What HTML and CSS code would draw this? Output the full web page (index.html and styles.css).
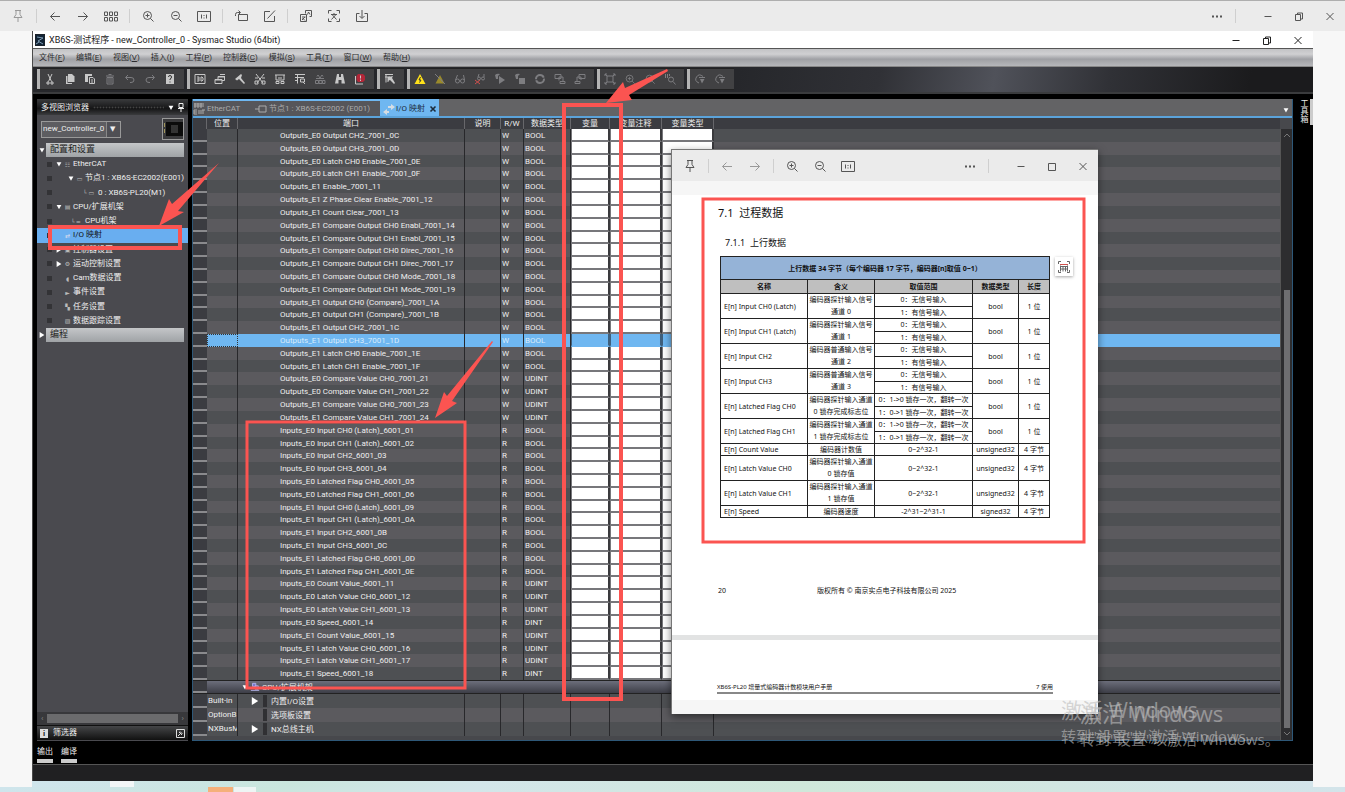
FILE: index.html
```html
<!DOCTYPE html>
<html lang="en">
<head>
<meta charset="utf-8">
<title>XB6S-测试程序 - Sysmac Studio</title>
<link rel="stylesheet" href="styles.css">
</head>
<body>
<svg class="defs" aria-hidden="true">
  <symbol id="pin" viewBox="0 0 14 14"><path d="M4 1.500h6M5 1.500v4L3 8.500h8L9 5.500v-4M7 8.500V13"/></symbol>
  <symbol id="back" viewBox="0 0 14 14"><path d="M12 7.500H2.500M6.500 3.500l-4 4 4 4"/></symbol>
  <symbol id="fwd" viewBox="0 0 14 14"><path d="M2 7.500h9.500M7.500 3.500l4 4-4 4"/></symbol>
  <symbol id="thumbs" viewBox="0 0 14 14"><path d="M.5 3h3v3.500h-3zM5.500 3h3v3.500h-3zM10.500 3h3v3.500h-3zM.5 8.500h3V12h-3zM5.500 8.500h3V12h-3zM10.500 8.500h3V12h-3z"/></symbol>
  <symbol id="zin" viewBox="0 0 14 14"><circle cx="6.500" cy="6.500" r="4"/><path d="M9.500 9.500l3 3M4.500 6.500h4M6.500 4.500v4"/></symbol>
  <symbol id="zout" viewBox="0 0 14 14"><circle cx="6.500" cy="6.500" r="4"/><path d="M9.500 9.500l3 3M4.500 6.500h4"/></symbol>
  <symbol id="one" viewBox="0 0 14 14"><path d="M.5 2.500h13v10H.5zM4.500 5.500v4M9.500 5.500v4M7 6v1M7 8.500v1"/></symbol>
  <symbol id="rot" viewBox="0 0 14 14"><path d="M4.500 5.500h9v6h-9zM1.500 7V5.500q0-2 2-2H6M4.500 1.500l2 2-2 2"/></symbol>
  <symbol id="edit" viewBox="0 0 14 14"><path d="M8 2.500H2.500v10h10V7M5.500 9.500l7.500-8"/></symbol>
  <symbol id="trans" viewBox="0 0 14 14"><path d="M6.500 1.500h6v6h-2M6.500 1.500v3M1.500 5.500h6v7h-6zM3 8h3.500M3 11l3-3M3.500 9l2.500 2.500M8.500 5.500l1-2.500 1.500 2.500"/></symbol>
  <symbol id="scan" viewBox="0 0 14 14"><path d="M1.500 4.500v-3h3M9.500 1.500h3v3M12.500 9.500v3h-3M4.500 12.500h-3v-3M4 5.500h6M7 4v1.500M9 5.500L4.500 10.500M5 5.500l4.500 5"/></symbol>
  <symbol id="save" viewBox="0 0 14 14"><path d="M4.500 4.500h-3v8h11v-8h-3M7 1v8M4.500 7L7 9.500 9.500 7"/></symbol>
  <symbol id="dots" viewBox="0 0 14 14"><path class="solid" d="M2 6.500h2v2H2zM6 6.500h2v2H6zM10 6.500h2v2h-2z"/></symbol>
  <symbol id="min" viewBox="0 0 14 14"><path d="M3.500 7.500h7"/></symbol>
  <symbol id="max" viewBox="0 0 14 14"><path d="M3.500 4.500h7v7h-7z"/></symbol>
  <symbol id="rest" viewBox="0 0 14 14"><path d="M3.500 5.500h5v6h-5zM5.500 5V4h5v6H9"/></symbol>
  <symbol id="close" viewBox="0 0 14 14"><path d="M3.500 4l7 7M10.500 4l-7 7"/></symbol>

  <symbol id="t-cut" viewBox="0 0 12 12"><path d="M4 1l3.500 7.500M8 1L4.500 8.500M3 9h2v2H3zM7 9h2v2H7z"/></symbol>
  <symbol id="t-copy" viewBox="0 0 12 12"><path class="solid" d="M4 1h4l2.500 2.500V9H4z"/><path class="solid" d="M2 3h1.500v7H8v1H2z"/></symbol>
  <symbol id="t-paste" viewBox="0 0 12 12"><path class="solid" d="M1 1h7v2H4v6H1z"/><path d="M5.500 4.500H9L10.500 6v4.500h-5zM7 7h2M7 9h2"/></symbol>
  <symbol id="t-del" viewBox="0 0 12 12"><path d="M2 3h8M4.500 1.500h3M3 4.500h6V11H3zM5 5v5M7 5v5"/></symbol>
  <symbol id="t-undo" viewBox="0 0 12 12"><path d="M4 2L1.500 4.500 4 7M2 4.500h5q3 0 3 2.500T7 9.500H6"/></symbol>
  <symbol id="t-redo" viewBox="0 0 12 12"><path d="M8 2l2.500 2.500L8 7M10 4.500H5Q2 4.500 2 7t3 2.500h1"/></symbol>
  <symbol id="t-help" viewBox="0 0 12 12"><path class="solid" d="M2 1h8v10H2z"/><path class="ink" d="M4.500 4q0-1.500 1.500-1.500T7.500 4 6 6v1M6 8.500v1"/></symbol>
  <symbol id="t-3d" viewBox="0 0 12 12"><path d="M1 1.500h10v9H1zM3 4h2v4H3M3 6h2M7 4h1l1 1v2L8 8H7z"/></symbol>
  <symbol id="t-win" viewBox="0 0 12 12"><path d="M1 6.500h7v4H1zM4 6V3.500h6.500v4H8M6 1.500h5"/><path class="solid" d="M4 3h7v1.500H4zM1 6h7v1.500H1z"/></symbol>
  <symbol id="t-build" viewBox="0 0 12 12"><path class="solid" d="M1 6l6-5 1 1-1 3 4 5-1 1-5-5-2 1.500z"/></symbol>
  <symbol id="t-cross" viewBox="0 0 12 12"><path d="M2 1l7 9M10 1L3 10M1 5h3M8 5h3M1 8h3v3H1zM8 8h3v3H8z"/></symbol>
  <symbol id="t-mon" viewBox="0 0 12 12"><path d="M1 2h10M2 2v5h8V2M4 5h4M2 10.500h3v-2H2zM7 10.500h3v-2H7z"/></symbol>
  <symbol id="t-grid" viewBox="0 0 12 12"><path d="M1 1.500h10M1 4.500h9M3.500 1.500v9M6.500 6h4v3h-4zM1 7.500h3M9 9l2 2"/></symbol>
  <symbol id="t-bin" viewBox="0 0 12 12"><path d="M3 3.500q1-3 2 0t2 0 2 0M2 5.500h8M1.500 7.500h3v3h-3zM5 7.500h3v3H5zM8.500 7.500H11v3H8.500z"/></symbol>
  <symbol id="t-find" viewBox="0 0 12 12"><path class="solid" d="M3 1h2v3h2V1h2l2 9.500H7.500V7h-3v3.500H1z"/></symbol>
  <symbol id="t-err" viewBox="0 0 12 12"><path d="M1.500 3v8H9"/><path class="red" d="M4 1h5l2 2v4L9 9H4L2.500 7V3z"/><path d="M6.500 2.500v3M6.500 6.500v1.500"/></symbol>
  <symbol id="t-sel" viewBox="0 0 12 12"><path d="M1 1.500h8M1 4h5M2 1.500v8M4 9V4"/><path class="solid" d="M4 4l5-1-1 2 3 5-1 1-4-4-2 1z"/></symbol>
  <symbol id="t-zfind" viewBox="0 0 12 12"><path d="M1.500 1v4M3.500 1v4M5.500 1v2"/><circle cx="7" cy="6.500" r="2.500"/><path d="M9 8.500l2.500 3"/></symbol>
  <symbol id="t-warn" viewBox="0 0 12 12"><path class="yel" d="M6 1l5.500 10H.5z"/><path class="ink" d="M6.500 4L5 7h2L5.500 9.500"/></symbol>
  <symbol id="t-warnoff" viewBox="0 0 12 12"><path class="yeldim" d="M6 2l4.500 8.500h-9z"/><path d="M1 1l10 10"/></symbol>
  <symbol id="t-eye" viewBox="0 0 12 12"><circle cx="3.500" cy="8" r="2"/><circle cx="8.500" cy="8" r="2"/><path d="M1.500 7l2-5M10.500 7l-1-5"/></symbol>
  <symbol id="t-eyex" viewBox="0 0 12 12"><circle cx="5" cy="5.500" r="1.500"/><circle cx="9" cy="5.500" r="1.500"/><path d="M4 4l1-3M10 4V1"/><path class="redline" d="M1 7l5 4M6 7l-5 4"/></symbol>
  <symbol id="t-run" viewBox="0 0 12 12"><path class="solid" d="M5 3l6 4-6 4zM1 2q2-2 5-1L4 3v3H2z"/></symbol>
  <symbol id="t-stop" viewBox="0 0 12 12"><path class="solid" d="M5 5h6v6H5zM1 2q2-2 5-1L4 3v3H2z"/></symbol>
  <symbol id="t-loop" viewBox="0 0 12 12"><circle cx="6" cy="6" r="4" stroke-width="2" stroke-dasharray="11 1"/></symbol>
  <symbol id="t-dn" viewBox="0 0 12 12"><path d="M1 1.500h6v4H1zM5 7.500V4h4v5M6 8.500h5v2H6z"/></symbol>
  <symbol id="t-up" viewBox="0 0 12 12"><path d="M5 1.500h6v4H5zM3 8V4h4v3M1 8.500h5v2H1z"/></symbol>
  <symbol id="t-fit" viewBox="0 0 12 12"><path d="M3 3h6v6H3zM1 1l2 2M11 1L9 3M1 11l2-2M11 11L9 9M1 3V1h2M9 1h2v2M11 9v2H9M3 11H1V9"/></symbol>
  <symbol id="t-go" viewBox="0 0 12 12"><path d="M9 3.500Q5 0 2.500 4T5 10M5 4.500h6"/><path class="solid" d="M6 6h4.500L8 10.500z"/></symbol>
</svg>

<div class="viewer">
  <header class="bar" data-bar="main"></header>

  <main class="canvas">
    <div class="app">
      <div class="title">
        <svg class="logo" viewBox="0 0 10 12"><path fill="#122436" d="M0 0h10v12H0z"/><path d="M2 3l6 1-5 3 5 3M1 10l3-2" stroke="#7f9cb4" fill="none"/></svg>
        <h1>XB6S-测试程序 - new_Controller_0 - Sysmac Studio (64bit)</h1>
        <div class="wctl">
          <button aria-label="Minimise"><svg><use href="#min"/></svg></button>
          <button aria-label="Restore"><svg><use href="#rest"/></svg></button>
          <button aria-label="Close"><svg><use href="#close"/></svg></button>
        </div>
      </div>
      <nav class="menu">
        <button>文件(<u>F</u>)</button><button>编辑(<u>E</u>)</button><button>视图(<u>V</u>)</button><button>插入(<u>I</u>)</button><button>工程(<u>P</u>)</button><button>控制器(<u>C</u>)</button><button>模拟(<u>S</u>)</button><button>工具(<u>T</u>)</button><button>窗口(<u>W</u>)</button><button>帮助(<u>H</u>)</button>
      </nav>
      <div class="tools" id="tools"></div>

      <div class="work">
        <aside class="side">
          <div class="side-head"><h2>多视图浏览器</h2><i class="dotline"></i><span class="tri down"></span><svg class="tack" viewBox="0 0 6 9"><path d="M1 .5h4v4H1zM0 5.500h6M3 5.500V9" stroke="#eee" fill="none"/></svg></div>
          <div class="side-body">
            <div class="pick">
              <select aria-label="Controller"><option>new_Controller_0</option></select>
              <button class="chip" aria-label="Controller picture"><svg viewBox="0 0 20 18"><path fill="#0b0b0b" stroke="none" d="M3 2h17v14H3z"/><path fill="#333" stroke="none" d="M8 5h7v8H8z"/><path stroke="#a0955a" d="M1.500 3v12" stroke-dasharray="4 2"/></svg></button>
            </div>
            <div class="sec"><span class="tri down"></span><h3>配置和设置</h3></div>
            <ul class="tree">
              <li class="d1"><b></b><span class="tri down"></span><em>☷</em>EtherCAT</li>
              <li class="d2"><b></b><span class="tri down"></span><em>▭</em>节点1 : XB6S-EC2002(E001)</li>
              <li class="d3"><b></b><em>└ ▭</em>0 : XB6S-PL20(M1)</li>
              <li class="d1"><b></b><span class="tri down"></span><em>▤</em>CPU/扩展机架</li>
              <li class="d2b"><b></b><em>└ ═</em>CPU机架</li>
              <li class="d1 on"><b></b><span class="tri none"></span><em>⇄</em>I/O 映射</li>
              <li class="d1"><b></b><span class="tri right"></span><em>▣</em>控制器设置</li>
              <li class="d1"><b></b><span class="tri right"></span><em>⚙</em>运动控制设置</li>
              <li class="d1"><b></b><span class="tri none"></span><em>◖</em>Cam数据设置</li>
              <li class="d1"><b></b><span class="tri none"></span><em>►</em>事件设置</li>
              <li class="d1"><b></b><span class="tri none"></span><em>▚</em>任务设置</li>
              <li class="d1"><b></b><span class="tri none"></span><em>▨</em>数据跟踪设置</li>
            </ul>
            <div class="sec"><span class="tri right"></span><h3>编程</h3></div>
          </div>
          <div class="hscroll"><span>‹</span><i></i><span>›</span></div>
          <div class="filter"><b>i</b><span>筛选器</span><svg viewBox="0 0 9 9"><path d="M.5.5h8v8h-8z" stroke="#ddd"/><path d="M2 7l2-2M3 3l3 3M4 2.500L6.500 5" stroke="#ddd"/></svg></div>
        </aside>

        <section class="doc">
          <div class="tabs">
            <button class="tab t1"><svg viewBox="0 0 12 14"><path d="M1 2h10M1 4h10M2 1v5M5 1v5M8 1v5M1 8h3M1 10h3M1 12h3M1 8v4M6 8v4M8 8v4M10 8v4M9 8h3" stroke="#aaa" fill="none"/></svg>EtherCAT</button>
            <button class="tab t2"><svg viewBox="0 0 12 14"><path d="M0 7h4M4 4h7v6H4z" stroke="#aaa" fill="none"/></svg>节点1 : XB6S-EC2002 (E001)</button>
            <button class="tab t3"><svg viewBox="0 0 12 14"><path d="M5 4h3V2l4 3-4 3V6H5zM6 9H4V7L0 10l4 3v-2h2z" fill="#d5dde4" stroke="none"/></svg>I/O 映射<svg class="x" viewBox="0 0 8 8"><path d="M1.500 1.500l5 5M6.500 1.500l-5 5" stroke-width="1.600"/></svg></button>
            <span class="tri down"></span>
          </div>
          <div class="gridwrap">
            <table class="grid">
              <thead><tr><th></th><th>位置</th><th>端口</th><th>说明</th><th>R/W</th><th>数据类型</th><th>变量</th><th>变量注释</th><th>变量类型</th><th></th></tr></thead>
              <tbody class="ports" id="ports"></tbody>
              <tbody class="racks">
                <tr class="rack"><td></td><td></td><td class="cpu"><span class="tri down"></span><svg viewBox="0 0 12 12"><path d="M3 1h4v4H3zM6 4h4v4H6zM1 9.500h10" stroke="#b8b8f0" fill="#7779cc"/></svg>CPU/扩展机架</td><td></td><td></td><td></td><td></td><td></td><td></td><td></td></tr>
                <tr><td></td><td>Built-in</td><td class="sub"><span class="tri right"></span><i></i>内置I/O设置</td><td></td><td></td><td></td><td></td><td></td><td></td><td></td></tr>
                <tr><td></td><td>OptionB</td><td class="sub"><span class="tri none"></span><i></i>选项板设置</td><td></td><td></td><td></td><td></td><td></td><td></td><td></td></tr>
                <tr><td></td><td>NXBusM</td><td class="sub"><span class="tri right"></span><i></i>NX总线主机</td><td></td><td></td><td></td><td></td><td></td><td></td><td></td></tr>
              </tbody>
            </table>
            <div class="vscroll"><svg viewBox="0 0 10 12"><path d="M2 8l3-3 3 3"/></svg><i></i><svg viewBox="0 0 10 12"><path d="M2 4l3 3 3-3"/></svg></div>
          </div>
        </section>
        <div class="toolbox"><span>工具箱</span><i></i></div>
      </div>
      <div class="outs"><button>输出</button><button>编译</button></div>
      <div class="status"></div>
      <div class="dock"></div>
    </div>
  </main>
  <footer class="taskbar"></footer>

  <section class="popup">
    <header class="bar" data-bar="popup"></header>
    <div class="page">
      <h2>7.1&nbsp; 过程数据</h2>
      <h3>7.1.1&nbsp; 上行数据</h3>
      <table class="spec">
        <colgroup><col class="c1"><col class="c2"><col class="c3"><col class="c4"><col class="c5"></colgroup>
        <thead>
          <tr class="cap"><th colspan="5">上行数据 34 字节（每个编码器 17 字节，编码器[n]取值 0~1）</th></tr>
          <tr class="cols"><th>名称</th><th>含义</th><th>取值范围</th><th>数据类型</th><th>长度</th></tr>
        </thead>
        <tbody id="spec"></tbody>
      </table>
      <button class="snip" aria-label="Table capture"><svg viewBox="0 0 14 14"><path d="M1.500 4V1.500H4M10 1.500h2.500V4M12.500 10v2.500H10M4 12.500H1.500V10M3.500 5.500v6M10.500 5.500v6M3.500 6.500h7M3.500 9h7M6 6.500v5M8.500 6.500v5"/><path class="redline" d="M3 4.500h8"/></svg></button>
      <p class="copy"><span>20</span><span>版权所有 © 南京实点电子科技有限公司 2025</span></p>
    </div>
    <div class="page next"><p><span>XB6S-PL20 增量式编码器计数模块用户手册</span><span>7 使用</span></p></div>
  </section>

  <div class="mark m1"><p>激活 Windows</p><p>转到"设置"以激活 Windows。</p></div>
  <div class="mark m2"><p>激活 Windows</p><p>转到"设置"以激活 Windows。</p></div>

  <svg class="notes" width="1345" height="792" viewBox="0 0 1345 792">
    <g fill="none" stroke="#fb5451">
      <rect x="564" y="105" width="57" height="594" stroke-width="4"/>
      <rect x="50" y="227" width="130" height="21" stroke-width="4"/>
      <rect x="247" y="422" width="218" height="266" stroke-width="3"/>
      <rect x="703" y="199" width="381" height="343" stroke-width="3"/>
    </g>
    <g fill="#fb5451">
      <path d="M667 69L625 88L623 82L606 103L632 100L629 95L668 71z"/>
      <path d="M219 163L172 204L169 199L159 226L184 212L178 211z"/>
      <path d="M492 341L447 396L444 392L435 418L457 403L452 401L493 342z"/>
    </g>
  </svg>
</div>
<script src="app.js"></script>
</body>
</html>
```
FILE: styles.css
```css
* { box-sizing: border-box; }
body, h1, h2, h3, p, ul { margin: 0; padding: 0; }
body { font-family: Roboto, "Noto Sans CJK SC", sans-serif; font-size: 8px; line-height: 12px; }
h1, h2, h3 { font-size: inherit; font-weight: 400; }
button, select { font: inherit; color: inherit; margin: 0; padding: 0; border: 0; background: none; appearance: none; }
ul { list-style: none; }
svg { fill: none; stroke: currentColor; flex: none; display: block; }
i, em { font-style: normal; }
.defs { position: absolute; width: 0; height: 0; }
.solid { fill: currentColor; stroke: none; }
.ink { stroke: #333; }
.red { fill: #b32638; stroke: none; }
.redline { stroke: #d0504c; }
.yel { fill: #ffe11a; stroke: none; }
.yeldim { fill: #9a8a2c; stroke: none; }

.viewer { position: relative; height: 100vh; min-height: 700px; display: flex; flex-direction: column; overflow: hidden; background: #f7f7f7; }

/* image viewer bars */
.bar { display: flex; align-items: center; height: 31px; padding-left: 4px; background: #ebebeb; color: #555; }
.viewer > .bar { border-top: 1px solid #aeaeae; }
.bar button { width: 28px; display: grid; place-items: center; }
.bar svg { width: 14px; height: 14px; }
.bar .sep { width: 1px; height: 14px; margin: 0 4px; background: #cfcfcf; }
.bar .dim { color: #999; }
.bar .grow { flex: 1; }
.bar .gap { width: 12px; }
.bar .wide { width: 31px; }

.canvas { flex: 1; min-height: 0; display: flex; padding: 0 32px; }
.app { flex: 1; min-width: 0; display: flex; flex-direction: column; background: #000; color: #eee; border-left: 1px solid #4a4a4a; }
.title { display: flex; align-items: center; height: 17px; padding-left: 2px; gap: 4px; background: #fff; color: #222; }
.title h1 { flex: 1; font: 9px/12px "Noto Sans", "Noto Sans CJK SC", sans-serif; font-family: Roboto, "Noto Sans CJK SC", sans-serif; }
.logo { width: 10px; height: 12px; }
.wctl { display: flex; }
.wctl button { width: 31px; display: grid; place-items: center; }
.wctl svg { width: 14px; height: 14px; }
.menu { display: flex; align-items: center; gap: 11px; height: 19px; padding-left: 6px; border-top: 1px solid #555; border-bottom: 1px solid #888; background: linear-gradient(#c2c3c5, #d0d0d2 30%, #9fa0a4 60%, #b6b7ba); color: #2c2c2e; }
.tools { display: flex; gap: 3px; height: 27px; padding: 1px 4px 2px; border-bottom: 2px solid #3a3b3d; background: linear-gradient(100deg, #26272b 55%, #303136 66%, #50525a 75%, #303136 84%, #1b1b1d 95%); }
.group { display: flex; align-items: center; padding-right: 4px; background: #414143; border: solid #222; border-width: 1px 0; color: #c8c8c8; }
.group::before { content: ""; width: 3px; align-self: stretch; background: #b4b4b4; }
.group button { width: 20px; display: grid; place-items: center; }
.group svg { width: 12px; height: 12px; }
.group .off { color: #7d7d80; }

.work { flex: 1; min-height: 0; display: flex; gap: 4px; padding: 5px 0 0 4px; }
.tri { width: 6px; height: 6px; flex: none; }
.tri.down { background: #fff; clip-path: polygon(10% 20%, 90% 20%, 50% 90%); }
.tri.right { background: #fff; clip-path: polygon(10% 0, 90% 50%, 10% 100%); }

/* left panel */
.side { width: 151px; flex: none; display: flex; flex-direction: column; background: #4a4a4f; }
.side-head { display: flex; align-items: center; gap: 4px; height: 16px; padding: 1px 4px 0; background: linear-gradient(#3a3b3d, #151516 60%, #3a3b3d); }
.dotline { flex: 1; height: 3px; background: radial-gradient(#444 40%, transparent 50%) 0 0 / 3px 3px; }
.tack { width: 6px; height: 9px; }
.side-body { flex: 1; padding: 3px 4px 0 2px; }
.pick { position: relative; display: flex; align-items: center; justify-content: space-between; height: 22px; margin-bottom: 3px; padding-left: 2px; }
.pick select { width: 80px; height: 17px; padding-left: 1px; border: 1px solid #999; background: linear-gradient(90deg, #5d5d61 64px, #888 64px, #888 65px, #4f4f54 65px); }
.pick::after { content: "▼"; position: absolute; left: 71px; top: 5px; font-family: "DejaVu Sans"; font-size: 7px; }
.chip { width: 22px; height: 22px; border: 1px solid #999; display: grid; place-items: center; background: #3a3a3c; }
.chip svg { width: 20px; height: 18px; }
.sec { display: flex; align-items: center; gap: 1px; height: 14px; }
.sec h3 { flex: 1; height: 14px; padding-left: 4px; font-size: 9px; line-height: 13px; color: #222; background: linear-gradient(#c4c6c8, #aeb1b4 60%, #a0a3a6); }
.tree { display: grid; grid-auto-rows: 1fr; height: 171px; margin: 0 -4px 0 -2px; }
.tree li { display: flex; align-items: center; gap: 2px; white-space: nowrap; padding-left: 10px; }
.tree b { width: 5px; height: 5px; background: #333336; flex: none; }
.tree em { width: 7px; font: 6px "DejaVu Sans"; text-align: center; color: #bbb; flex: none; }
.tree .d1 .tri { margin-left: 2px; }
.tree .d2 .tri { margin-left: 14px; }
.tree .d3 em { width: 15px; margin-left: 27px; }
.tree .d2b em { width: 15px; margin-left: 14px; }
.tree .on { background: #69aef0; color: #111; }
.tree .on em { color: #dde; }
.hscroll { display: flex; align-items: center; gap: 4px; height: 13px; padding: 0 4px; background: #38383b; color: #888; }
.hscroll i { flex: 1; height: 9px; background: #6b6b6d; }
.filter { display: flex; align-items: center; gap: 5px; height: 15px; margin-bottom: 1px; padding: 0 3px; border-top: 1px solid #111; background: linear-gradient(#454648, #111); }
.filter b { width: 8px; height: 9px; background: #ddd; color: #222; line-height: 9px; text-align: center; }
.filter span { flex: 1; }
.filter svg { width: 9px; height: 9px; }

/* document */
.doc { flex: 1; min-width: 0; display: flex; flex-direction: column; border: solid #2e5878; border-width: 0 1px 1px; background: #47484c; }
.tabs { display: flex; height: 19px; border-bottom: 2px solid #5ba3da; background: #636365; }
.tab { display: flex; align-items: center; gap: 2px; border-top: 2px solid #6fb7f1; background: #56565a; color: #aaa; }
.tab svg { width: 12px; height: 14px; }
.t1 { width: 62px; }
.t2 { width: 125px; }
.t3 { width: 59px; padding: 0 2px 0 3px; gap: 1px; background: #6fb7f1; color: #1c2c3c; }
.tab .x { width: 8px; height: 8px; margin-left: auto; }
.tabs > .tri { margin: 8px 3px 0 auto; }
.gridwrap { flex: 1; min-height: 0; display: flex; }
.grid { flex: 1; min-width: 0; display: flex; flex-direction: column; padding-bottom: 4px; }
.grid thead, .racks { display: block; }
.grid tr { display: grid; grid-template-columns: 14px 31px 227px 36px 23px 47px 39px 52px 52px 1fr; min-height: 0; }
.grid th { height: 11px; padding: 0; line-height: 11px; font-weight: 400; background: #3b3c41; border-right: 1px solid #67676b; white-space: nowrap; overflow: hidden; }
.grid th:last-child { border: 0; }
.grid td { padding: 0 0 0 1px; border-right: 1px solid #28282b; overflow: hidden; white-space: nowrap; }
.grid td:last-child { border: 0; }
.ports { flex: 1; min-height: 0; display: grid; grid-auto-rows: minmax(0, 1fr); line-height: 13px; }
.ports tr:nth-child(odd) { background: #4e5053; }
.ports tr:nth-child(even) { background: #5b5a5e; }
.grid tbody td:first-child { background: #3b3c41; border-right: 0; border-bottom: 2px solid #8a8a8d; }
.ports td:nth-child(3) { padding-left: 42px; }
.ports td:nth-child(n+7):nth-child(-n+9) { background: #fff; border: solid #77777b; border-width: 0 2px 2px 1px; border-right-color: #3a3a3d; }
.ports tr.hit td:not(:first-child) { background: #6fb7f1; color: #d9ecfb; }
.ports tr.hit td:nth-child(n+7):nth-child(-n+9) { border-color: #3f5f7c; border-bottom-color: #6fb7f1; }
.ports tr.hit td:nth-child(2) { border: 1px dotted #333; }
.racks tr { height: 14px; line-height: 13px; background: #4e5053; }
.racks tr:nth-child(3) { background: #5b5a5e; }
.racks tr.rack { background: linear-gradient(#6c6e7b, #3d3e47); border: solid #222; border-width: 1px 0; }
.racks tr.rack td:not(:first-child) { border-right: 0; }
.cpu, .sub { display: flex; align-items: center; }
.racks .cpu { gap: 2px; padding-left: 4px; }
.cpu svg { width: 10px; height: 11px; }
.sub { gap: 4px; }
.racks .sub { padding-left: 13px; }
.sub .tri { width: 8px; height: 8px; }
.sub i { width: 4px; height: 12px; background: #303033; }
.vscroll { width: 12px; margin-top: 11px; padding: 0 1px; display: flex; flex-direction: column; align-items: center; background: #2d2d2f; border-left: 1px solid #555; color: #777; }
.vscroll svg { width: 10px; height: 12px; }
.vscroll i { flex: 1; width: 6px; margin-top: 149px; background: #6e6e70; }
.toolbox { width: 20px; margin-left: -4px; padding-left: 4px; display: flex; justify-content: space-between; }
.toolbox span { writing-mode: vertical-rl; line-height: 12px; }
.toolbox i { width: 3px; height: 26px; background: #ccc; }

.outs { display: flex; gap: 8px; height: 23px; padding: 4px 4px 0; }
.outs button { height: 18px; line-height: 12px; border-bottom: 4px solid #ccc; display: block; }
.status { height: 17px; border-top: 1px solid #555; background: #202022; }
.dock { height: 6px; margin-left: -1px; background: linear-gradient(#f2f6f7, #f2f6f7) 78px 0 / 24px 6px no-repeat, linear-gradient(90deg, #cfe5ec, #c9e6dd 20%, #d3e6ea 35%, #cfe8da 60%, #d3e4ea); }
.taskbar { height: 5px; background: linear-gradient(#f5b07a, #f5b07a) 208px 0 / 25px 5px no-repeat, linear-gradient(#eef5f4, #eef5f4) 234px 0 / 22px 5px no-repeat, linear-gradient(90deg, #cfe5ec, #c9e6dd 20%, #d3e6ea 35%, #cfe8da 60%, #d3e4ea); }

/* floating manual window */
.popup { position: absolute; left: 671px; top: 149px; width: 427px; border: 1px solid #777; border-width: 1px 0 0 1px; background: #f6f6f6; color: #111; padding-bottom: 14px; box-shadow: 0 3px 8px rgba(0, 0, 0, .5); font-family: "Noto Sans", "Noto Sans CJK SC", sans-serif; font-size: 7px; line-height: 11px; }
.popup .bar { margin-bottom: 14px; }
.page { position: relative; height: 440px; padding: 10px 48px 0; background: #fff; }
.page h2 { margin-left: -2px; font-size: 11px; line-height: 16px; }
.page h3 { margin: 16px 0 7px 5px; font-size: 9px; line-height: 12px; }
.spec { width: 329px; table-layout: fixed; border-collapse: collapse; }
.c1 { width: 87px; } .c2 { width: 67px; } .c3 { width: 98px; } .c4 { width: 46px; } .c5 { width: 31px; }
.spec th, .spec td { padding: 0; border: 1px solid #222; text-align: center; line-height: 11px; white-space: nowrap; }
.spec td:first-child.name { text-align: left; padding-left: 3px; }
.spec .cap th { height: 23px; background: #95b3d7; font-size: 7px; }
.spec .cols th { height: 14px; background: #bfbfbf; }
.spec .tall { line-height: 12px; }
.spec .tall.single { line-height: 11px; }
.snip { position: absolute; left: 383px; top: 62px; width: 18px; height: 19px; display: grid; place-items: center; background: #fff; box-shadow: 0 1px 3px rgba(0, 0, 0, .35); color: #666; }
.snip svg { width: 14px; height: 14px; }
.copy { position: absolute; left: 46px; right: 0; bottom: 39px; display: flex; gap: 91px; }
.page.next { height: 65px; padding: 42px 45px 0; border-top: 5px solid #e2e3e3; }
.next p { display: flex; justify-content: space-between; font-size: 6px; line-height: 10px; border-bottom: 2px solid #888; }

.mark { position: absolute; color: rgba(190, 190, 190, .62); white-space: nowrap; font-family: "Open Sans", "Noto Sans CJK SC", sans-serif; }
.mark p:first-child { font-size: 22px; line-height: 28px; }
.mark p + p { font-size: 15px; line-height: 24px; }
.m1 { left: 1061px; top: 696px; }
.m2 { left: 1080px; top: 699px; }
.m1 p:first-child { font-size: 21px; }
.notes { position: absolute; left: 0; top: 0; pointer-events: none; stroke: none; }
```
FILE: app.js
```js
const use = (id) => `<svg><use href="#${id}"/></svg>`;
const btn = (id, cls = "") => `<button class="${cls}" aria-label="${id}">${use(id)}</button>`;
const sep = '<span class="sep"></span>';

const tail = (box) =>
  '<span class="grow"></span>' + btn("dots") + sep + '<span class="gap"></span>' +
  btn("min", "wide") + btn(box, "wide") + btn("close", "wide");

document.querySelector('[data-bar="main"]').innerHTML =
  btn("pin", "dim") + sep + btn("back") + btn("fwd") + btn("thumbs") + sep +
  btn("zin") + btn("zout") + btn("one") + sep + btn("rot") + btn("edit") + sep +
  btn("trans") + btn("scan") + btn("save") + tail("rest");

document.querySelector('[data-bar="popup"]').innerHTML =
  btn("pin") + sep + btn("back", "dim") + btn("fwd", "dim") + sep +
  btn("zin") + btn("zout") + btn("one") + tail("max");

// A leading "-" marks a disabled tool.
const groups = [
  "t-cut t-copy t-paste -t-del -t-undo -t-redo t-help",
  "t-3d t-win t-build t-cross t-mon t-grid -t-bin t-find t-err",
  "t-sel",
  "t-warn -t-warnoff -t-eye -t-eyex -t-run -t-stop -t-loop -t-dn -t-up",
  "-t-fit -zin -zout -t-zfind",
  "-t-go -t-go",
];
document.getElementById("tools").innerHTML = groups.map((g) =>
  '<div class="group">' + g.split(" ").map((n) =>
    n[0] === "-" ? btn(n.slice(1), "off") : btn(n)).join("") + "</div>").join("");

const outputs = `E0 Output CH2_7001_0C
E0 Output CH3_7001_0D
E0 Latch CH0 Enable_7001_0E
E0 Latch CH1 Enable_7001_0F
E1 Enable_7001_11
E1 Z Phase Clear Enable_7001_12
E1 Count Clear_7001_13
E1 Compare Output CH0 Enabl_7001_14
E1 Compare Output CH1 Enabl_7001_15
E1 Compare Output CH0 Direc_7001_16
E1 Compare Output CH1 Direc_7001_17
E1 Compare Output CH0 Mode_7001_18
E1 Compare Output CH1 Mode_7001_19
E1 Output CH0 (Compare)_7001_1A
E1 Output CH1 (Compare)_7001_1B
E1 Output CH2_7001_1C
E1 Output CH3_7001_1D
E1 Latch CH0 Enable_7001_1E
E1 Latch CH1 Enable_7001_1F
E0 Compare Value CH0_7001_21
E0 Compare Value CH1_7001_22
E1 Compare Value CH0_7001_23
E1 Compare Value CH1_7001_24`.split("\n");
const inputs = `E0 Input CH0 (Latch)_6001_01
E0 Input CH1 (Latch)_6001_02
E0 Input CH2_6001_03
E0 Input CH3_6001_04
E0 Latched Flag CH0_6001_05
E0 Latched Flag CH1_6001_06
E1 Input CH0 (Latch)_6001_09
E1 Input CH1 (Latch)_6001_0A
E1 Input CH2_6001_0B
E1 Input CH3_6001_0C
E1 Latched Flag CH0_6001_0D
E1 Latched Flag CH1_6001_0E
E0 Count Value_6001_11
E0 Latch Value CH0_6001_12
E0 Latch Value CH1_6001_13
E0 Speed_6001_14
E1 Count Value_6001_15
E1 Latch Value CH0_6001_16
E1 Latch Value CH1_6001_17
E1 Speed_6001_18`.split("\n");
const typeOf = (n) => n.includes("Speed") ? "DINT" : n.includes("Value") ? "UDINT" : "BOOL";
const row = (name, rw) =>
  `<tr${name.endsWith("_1D") ? ' class="hit"' : ""}><td></td><td></td><td>${name}</td><td></td><td>${rw}</td><td>${typeOf(name)}</td><td></td><td></td><td></td><td></td></tr>`;
document.getElementById("ports").innerHTML =
  outputs.map((n) => row("Outputs_" + n, "W")).join("") +
  inputs.map((n) => row("Inputs_" + n, "R")).join("");

const onOff = ["0：无信号输入", "1：有信号输入"];
const flip = ["0：1-&gt;0 锁存一次，翻转一次", "1：0-&gt;1 锁存一次，翻转一次"];
const spec = [
  ["Input CH0 (Latch)", "编码器探针输入信号<br>通道 0", onOff, "bool", "1 位"],
  ["Input CH1 (Latch)", "编码器探针输入信号<br>通道 1", onOff, "bool", "1 位"],
  ["Input CH2", "编码器普通输入信号<br>通道 2", onOff, "bool", "1 位"],
  ["Input CH3", "编码器普通输入信号<br>通道 3", onOff, "bool", "1 位"],
  ["Latched Flag CH0", "编码器探针输入通道<br>0 锁存完成标志位", flip, "bool", "1 位"],
  ["Latched Flag CH1", "编码器探针输入通道<br>1 锁存完成标志位", flip, "bool", "1 位"],
  ["Count Value", "编码器计数值", ["0~2^32-1"], "unsigned32", "4 字节"],
  ["Latch Value CH0", "编码器探针输入通道<br>0 锁存值", ["0~2^32-1"], "unsigned32", "4 字节"],
  ["Latch Value CH1", "编码器探针输入通道<br>1 锁存值", ["0~2^32-1"], "unsigned32", "4 字节"],
  ["Speed", "编码器速度", ["-2^31~2^31-1"], "signed32", "4 字节"],
];
document.getElementById("spec").innerHTML = spec.map(([n, m, r, t, l]) => {
  const s = ` rowspan="${r.length}"`;
  const tall = m.includes("<br>") ? "tall" : "tall single";
  return `<tr><td class="name"${s}>E[n] ${n}</td><td class="${tall}"${s}>${m}</td><td>${r[0]}</td><td${s}>${t}</td><td${s}>${l}</td></tr>` +
    (r[1] ? `<tr><td>${r[1]}</td></tr>` : "");
}).join("");
```
